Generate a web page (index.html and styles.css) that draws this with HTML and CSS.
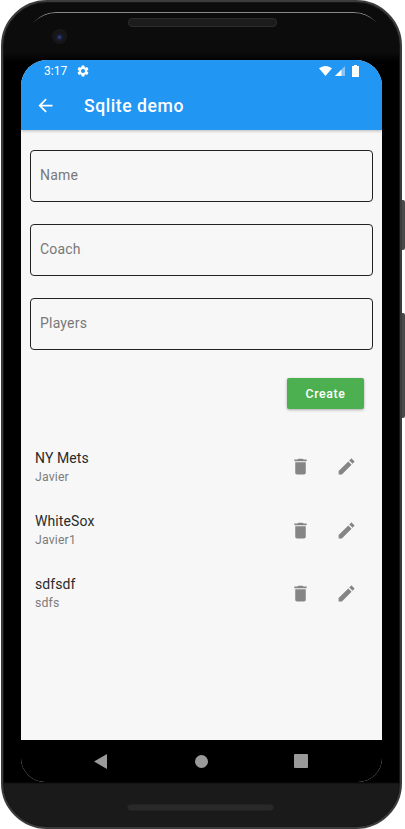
FILE: index.html
```html
<!DOCTYPE html>
<html lang="en">
<head>
    <meta charset="UTF-8">
    <title>Sqlite demo</title>
    <link rel="stylesheet" href="styles.css">
</head>
<body>
    <div class="phone">
        <div class="side-btn side-btn-power"></div>
        <div class="side-btn side-btn-volume"></div>
        <div class="top-bezel">
            <div class="glass-edge"></div>
            <div class="camera"></div>
            <div class="speaker"></div>
        </div>
        <div class="screen">
            <div class="header">
                <div class="status-bar">
                    <span class="clock">3:17</span>
                    <svg class="gear" viewBox="0 0 24 24"><path d="M19.14 12.94c.04-.3.06-.61.06-.94 0-.32-.02-.64-.07-.94l2.03-1.58a.49.49 0 0 0 .12-.61l-1.92-3.32a.49.49 0 0 0-.59-.22l-2.39.96c-.5-.38-1.03-.7-1.62-.94l-.36-2.54a.48.48 0 0 0-.48-.41h-3.84c-.24 0-.43.17-.47.41l-.36 2.54c-.59.24-1.13.57-1.62.94l-2.39-.96a.49.49 0 0 0-.59.22L2.74 8.87c-.12.21-.08.47.12.61l2.03 1.58c-.05.3-.09.63-.09.94s.02.64.07.94l-2.03 1.58a.49.49 0 0 0-.12.61l1.92 3.32c.12.22.37.29.59.22l2.39-.96c.5.38 1.03.7 1.62.94l.36 2.54c.05.24.24.41.48.41h3.84c.24 0 .44-.17.47-.41l.36-2.54c.59-.24 1.13-.56 1.62-.94l2.39.96c.22.08.47 0 .59-.22l1.92-3.32c.12-.22.07-.47-.12-.61l-2.01-1.58zM12 15.6A3.6 3.6 0 1 1 12 8.4a3.6 3.6 0 0 1 0 7.2z"/></svg>
                    <span class="status-icons">
                        <svg class="wifi" viewBox="0 0 14 11" preserveAspectRatio="none"><path d="M0 2.6C1.9 1 4.3 0 7 0s5.100 1 7 2.600L7 11z"/></svg>
                        <svg class="signal" viewBox="0 0 11 11" preserveAspectRatio="none"><path class="signal-bg" d="M11 0v11H0z"/><path d="M7 4v7H0z"/></svg>
                        <svg class="battery" viewBox="0 0 7 12"><path d="M2 0h3v1h2v11H0V1h2z"/></svg>
                    </span>
                </div>
                <div class="app-bar">
                    <svg class="back" viewBox="0 0 24 24"><path d="M20 11H7.830l5.590-5.590L12 4l-8 8 8 8 1.410-1.410L7.830 13H20v-2z"/></svg>
                    <span class="title">Sqlite demo</span>
                </div>
            </div>
            <div class="content">
                <div class="form">
                    <div class="field">Name</div>
                    <div class="field">Coach</div>
                    <div class="field">Players</div>
                </div>
                <div class="actions">
                    <button class="create-btn">Create</button>
                </div>
                <div class="list">
                    <div class="row">
                        <div class="row-text">
                            <div class="team">NY Mets</div>
                            <div class="coach">Javier</div>
                        </div>
                        <svg class="icon" viewBox="0 0 24 24"><path d="M6 19c0 1.100.9 2 2 2h8c1.100 0 2-.9 2-2V7H6v12zM19 4h-3.500l-1-1h-5l-1 1H5v2h14V4z"/></svg>
                        <svg class="icon" viewBox="0 0 24 24"><path d="M3 17.250V21h3.750L17.810 9.940l-3.750-3.750L3 17.250zM20.710 7.040c.39-.39.39-1.020 0-1.410l-2.340-2.340c-.39-.39-1.020-.39-1.410 0l-1.830 1.830 3.750 3.750 1.830-1.830z"/></svg>
                    </div>
                    <div class="row">
                        <div class="row-text">
                            <div class="team">WhiteSox</div>
                            <div class="coach">Javier1</div>
                        </div>
                        <svg class="icon" viewBox="0 0 24 24"><path d="M6 19c0 1.100.9 2 2 2h8c1.100 0 2-.9 2-2V7H6v12zM19 4h-3.500l-1-1h-5l-1 1H5v2h14V4z"/></svg>
                        <svg class="icon" viewBox="0 0 24 24"><path d="M3 17.250V21h3.750L17.810 9.940l-3.750-3.750L3 17.250zM20.710 7.040c.39-.39.39-1.020 0-1.410l-2.340-2.340c-.39-.39-1.020-.39-1.410 0l-1.830 1.830 3.750 3.750 1.830-1.830z"/></svg>
                    </div>
                    <div class="row">
                        <div class="row-text">
                            <div class="team">sdfsdf</div>
                            <div class="coach">sdfs</div>
                        </div>
                        <svg class="icon" viewBox="0 0 24 24"><path d="M6 19c0 1.100.9 2 2 2h8c1.100 0 2-.9 2-2V7H6v12zM19 4h-3.500l-1-1h-5l-1 1H5v2h14V4z"/></svg>
                        <svg class="icon" viewBox="0 0 24 24"><path d="M3 17.250V21h3.750L17.810 9.940l-3.750-3.750L3 17.250zM20.710 7.040c.39-.39.39-1.020 0-1.410l-2.340-2.340c-.39-.39-1.020-.39-1.410 0l-1.830 1.830 3.750 3.750 1.830-1.830z"/></svg>
                    </div>
                </div>
            </div>
            <div class="nav-bar">
                <div class="nav-cell"><svg class="nav-back" viewBox="0 0 13 15"><path d="M13 0v15L0 7.500z"/></svg></div>
                <div class="nav-cell"><div class="nav-home"></div></div>
                <div class="nav-cell"><div class="nav-recent"></div></div>
            </div>
        </div>
        <div class="bottom-bezel">
            <div class="speaker speaker-bottom"></div>
        </div>
    </div>
</body>
</html>
```

FILE: styles.css
```css
* {
    box-sizing: border-box;
}
body {
    margin: 0;
    width: 405px;
    height: 829px;
    overflow: hidden;
    background: #fff;
    font-family: Roboto, "Liberation Sans", sans-serif;
}
.phone {
    position: relative;
    width: 401px;
    height: 829px;
    margin-left: 1px;
    padding: 0 16px 0 18px;
    border: 2px solid #3c3c3c;
    border-radius: 46px;
    background: linear-gradient(#0c0c0c 0, #0c0c0c 50px, #000 60px, #000 780px, #1a1a1a 782px);
    box-shadow: inset 0 0 0 1px #161616;
}
.side-btn {
    position: absolute;
    left: 399px;
    width: 3px;
    background: #4a4a4a;
    border-radius: 0 2px 2px 0;
}
.side-btn-power {
    top: 198px;
    height: 50px;
}
.side-btn-volume {
    top: 311px;
    height: 105px;
}

/* bezels */
.top-bezel {
    position: relative;
    height: 58px;
    padding-top: 16px;
}
.glass-edge {
    position: absolute;
    top: 10px;
    left: 5px;
    right: 0;
    height: 30px;
    border-top: 1px solid #8a8a8a;
    border-radius: 32px 32px 0 0;
    -webkit-mask-image: linear-gradient(#000 0, #000 4px, transparent 12px);
}
.camera {
    position: absolute;
    left: 31px;
    top: 27px;
    width: 15px;
    height: 15px;
    border-radius: 50%;
    background: radial-gradient(circle at 50% 55%, #3b4a9a 0, #1a1d33 22%, #151515 45%, #1c1c1c 100%);
}
.speaker {
    width: 149px;
    height: 9px;
    margin-left: 107px;
    border: 1px solid #2c2c2c;
    border-radius: 4px;
    background: #1c1c1c;
}
.bottom-bezel {
    height: 47px;
    padding-top: 22px;
}
.speaker-bottom {
    width: 147px;
    height: 7px;
    margin-left: 106px;
    border-color: #222;
    background: #292929;
}

/* screen */
.screen {
    display: flex;
    flex-direction: column;
    width: 361px;
    height: 722px;
    overflow: hidden;
    border-radius: 26px 26px 24px 24px;
    background: #f7f7f7;
}
.header {
    background: #2196f3;
    color: #fff;
    box-shadow: 0 1px 3px rgba(0, 0, 0, 0.25);
}
.status-bar {
    display: flex;
    align-items: center;
    height: 21px;
    padding: 0 23px;
}
.clock {
    width: 23px;
    font-size: 12px;
}
.gear {
    width: 14px;
    height: 14px;
    margin-left: 9px;
    fill: #fff;
}
.status-icons {
    display: flex;
    align-items: center;
    gap: 3px;
    margin-left: auto;
}
.status-icons svg {
    fill: #fff;
}
.wifi {
    width: 13px;
    height: 10px;
}
.signal {
    width: 10px;
    height: 10px;
}
.signal-bg {
    opacity: 0.45;
}
.battery {
    width: 7px;
    height: 12px;
    margin-left: 4px;
}
.app-bar {
    display: flex;
    align-items: center;
    height: 49px;
    padding-left: 14px;
}
.back {
    width: 21px;
    height: 21px;
    fill: #fff;
}
.title {
    margin-left: 28px;
    font-size: 17.600px;
    font-weight: 500;
    letter-spacing: 0.55px;
}
.content {
    flex: 1;
    padding-top: 20px;
}
.form {
    display: flex;
    flex-direction: column;
    gap: 22px;
    padding: 0 9px;
}
.field {
    height: 52px;
    padding: 15px 9px 0;
    border: 1px solid #222;
    border-radius: 4px;
    color: #777;
    font-size: 14px;
    line-height: 18px;
    letter-spacing: 0.2px;
}
.actions {
    display: flex;
    justify-content: flex-end;
    padding: 28px 18px 0 0;
}
.create-btn {
    width: 77px;
    height: 31px;
    padding: 0;
    border: none;
    border-radius: 2px;
    background: #4caf50;
    color: #fff;
    font-family: inherit;
    font-size: 12.300px;
    font-weight: 500;
    letter-spacing: 0.6px;
    box-shadow: 0 1px 3px rgba(0, 0, 0, 0.3);
}
.list {
    padding-top: 26px;
}
.row {
    display: flex;
    align-items: center;
    height: 63.400px;
    padding: 0 25px 0 14px;
}
.row-text {
    flex: 1;
}
.team {
    color: #2a2a2a;
    font-size: 14px;
    line-height: 19px;
    letter-spacing: 0.1px;
}
.coach {
    margin-top: 1px;
    color: #7c7c7c;
    font-size: 12.300px;
    line-height: 16px;
    letter-spacing: 0.15px;
}
.icon {
    width: 21px;
    height: 21px;
    margin-left: 25px;
    fill: #858585;
}
.nav-bar {
    display: flex;
    justify-content: center;
    align-items: center;
    height: 42px;
    padding-right: 1px;
    background: #000;
}
.nav-cell {
    display: flex;
    justify-content: center;
    width: 100px;
}
.nav-back {
    width: 13px;
    height: 15px;
    margin-right: 1px;
    fill: #9a9a9a;
}
.nav-home {
    width: 13px;
    height: 13px;
    border-radius: 50%;
    background: #9a9a9a;
}
.nav-recent {
    width: 14px;
    height: 14px;
    border-radius: 1px;
    background: #9a9a9a;
}
```
